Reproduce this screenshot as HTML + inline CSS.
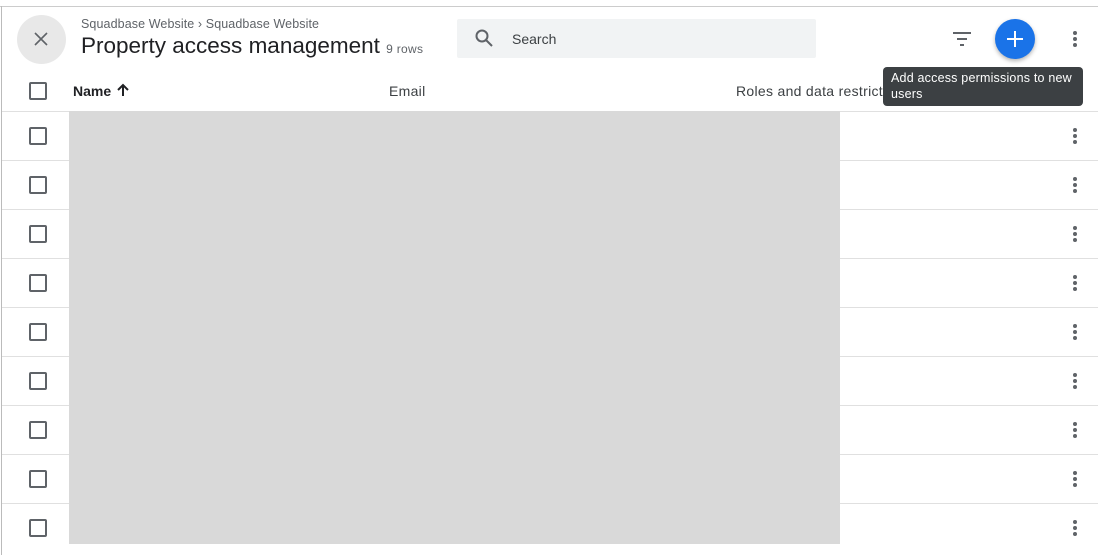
<!DOCTYPE html>
<html><head><style>
body{margin:0;width:1098px;height:555px;background:#fff;font-family:"Liberation Sans",sans-serif;position:relative;overflow:hidden}
.a{position:absolute}
.cb{position:absolute;left:29px;width:14px;height:14px;border:2px solid #5f6368;border-radius:2px}
.line{position:absolute;left:2px;width:1096px;height:1px;background:#e0e0e0}
.dots{position:absolute;left:1073px;width:4px}
.dots i{display:block;width:4px;height:4px;border-radius:2px;background:#5f6368;margin-bottom:2px}
</style></head><body>
<div class="a" style="left:0;top:6px;width:1098px;height:1px;background:#ccc"></div>
<div class="a" style="left:1px;top:6px;width:1px;height:549px;background:#bbb"></div>
<div class="a" style="left:17px;top:15px;width:49px;height:49px;border-radius:50%;background:#e8e8e8"></div>
<svg class="a" style="left:32px;top:30px" width="18" height="18"><path d="M3 3L15 15M15 3L3 15" stroke="#5f6368" stroke-width="1.6"/></svg>
<div class="a" style="left:81px;top:17px;font-size:12.5px;color:#5f6368;letter-spacing:0.1px">Squadbase Website › Squadbase Website</div>
<div class="a" style="left:81px;top:33px;font-size:22.5px;color:#202124">Property access management <span style="font-size:12px;color:#5f6368;letter-spacing:0.3px">9 rows</span></div>
<div class="a" style="left:457px;top:19px;width:359px;height:39px;background:#f1f3f4;border-radius:2px"></div>
<svg class="a" style="left:474px;top:28px" width="20" height="20"><circle cx="8" cy="8" r="5.5" fill="none" stroke="#5f6368" stroke-width="2"/><path d="M12 12L18 18" stroke="#5f6368" stroke-width="2"/></svg>
<div class="a" style="left:512px;top:31px;font-size:14px;color:#3c4043">Search</div>
<svg class="a" style="left:952px;top:30px" width="22" height="18"><path d="M1 3H19M5 9H15M8 15H12" stroke="#5f6368" stroke-width="2"/></svg>
<div class="a" style="left:995px;top:19px;width:40px;height:40px;border-radius:50%;background:#1a73e8;box-shadow:0 2px 4px rgba(0,0,0,.3)"></div>
<svg class="a" style="left:1005px;top:29px" width="20" height="20"><path d="M10 2V18M2 10H18" stroke="#fff" stroke-width="2"/></svg>
<div class="dots" style="top:31px"><i></i><i></i><i></i></div>
<div class="a" style="left:883px;top:67px;width:200px;height:39px;background:#3c4043;border-radius:4px;color:#fff;font-size:12.5px;line-height:16px;padding:3px 8px;box-sizing:border-box;letter-spacing:0.2px">Add access permissions to new users</div>
<div class="cb" style="top:82px"></div>
<div class="a" style="left:73px;top:83px;font-size:14px;font-weight:bold;color:#202124">Name</div>
<svg class="a" style="left:116px;top:83px" width="14" height="14"><path d="M7 13V2M2 7L7 2L12 7" stroke="#202124" stroke-width="2" fill="none"/></svg>
<div class="a" style="left:389px;top:83px;font-size:14px;color:#3c4043;letter-spacing:0.3px">Email</div>
<div class="a" style="left:736px;top:83px;font-size:14px;color:#3c4043;letter-spacing:0.3px">Roles and data restrict</div>
<div class="line" style="top:111px"></div>
<div class="line" style="top:160px"></div><div class="line" style="top:209px"></div><div class="line" style="top:258px"></div><div class="line" style="top:307px"></div><div class="line" style="top:356px"></div><div class="line" style="top:405px"></div><div class="line" style="top:454px"></div><div class="line" style="top:503px"></div>
<div class="a" style="left:69px;top:111px;width:771px;height:433px;background:#d9d9d9"></div>
<div class="cb" style="top:127px"></div><div class="cb" style="top:176px"></div><div class="cb" style="top:225px"></div><div class="cb" style="top:274px"></div><div class="cb" style="top:323px"></div><div class="cb" style="top:372px"></div><div class="cb" style="top:421px"></div><div class="cb" style="top:470px"></div><div class="cb" style="top:519px"></div>
<div class="dots" style="top:128px"><i></i><i></i><i></i></div><div class="dots" style="top:177px"><i></i><i></i><i></i></div><div class="dots" style="top:226px"><i></i><i></i><i></i></div><div class="dots" style="top:275px"><i></i><i></i><i></i></div><div class="dots" style="top:324px"><i></i><i></i><i></i></div><div class="dots" style="top:373px"><i></i><i></i><i></i></div><div class="dots" style="top:422px"><i></i><i></i><i></i></div><div class="dots" style="top:471px"><i></i><i></i><i></i></div><div class="dots" style="top:520px"><i></i><i></i><i></i></div>
</body></html>
